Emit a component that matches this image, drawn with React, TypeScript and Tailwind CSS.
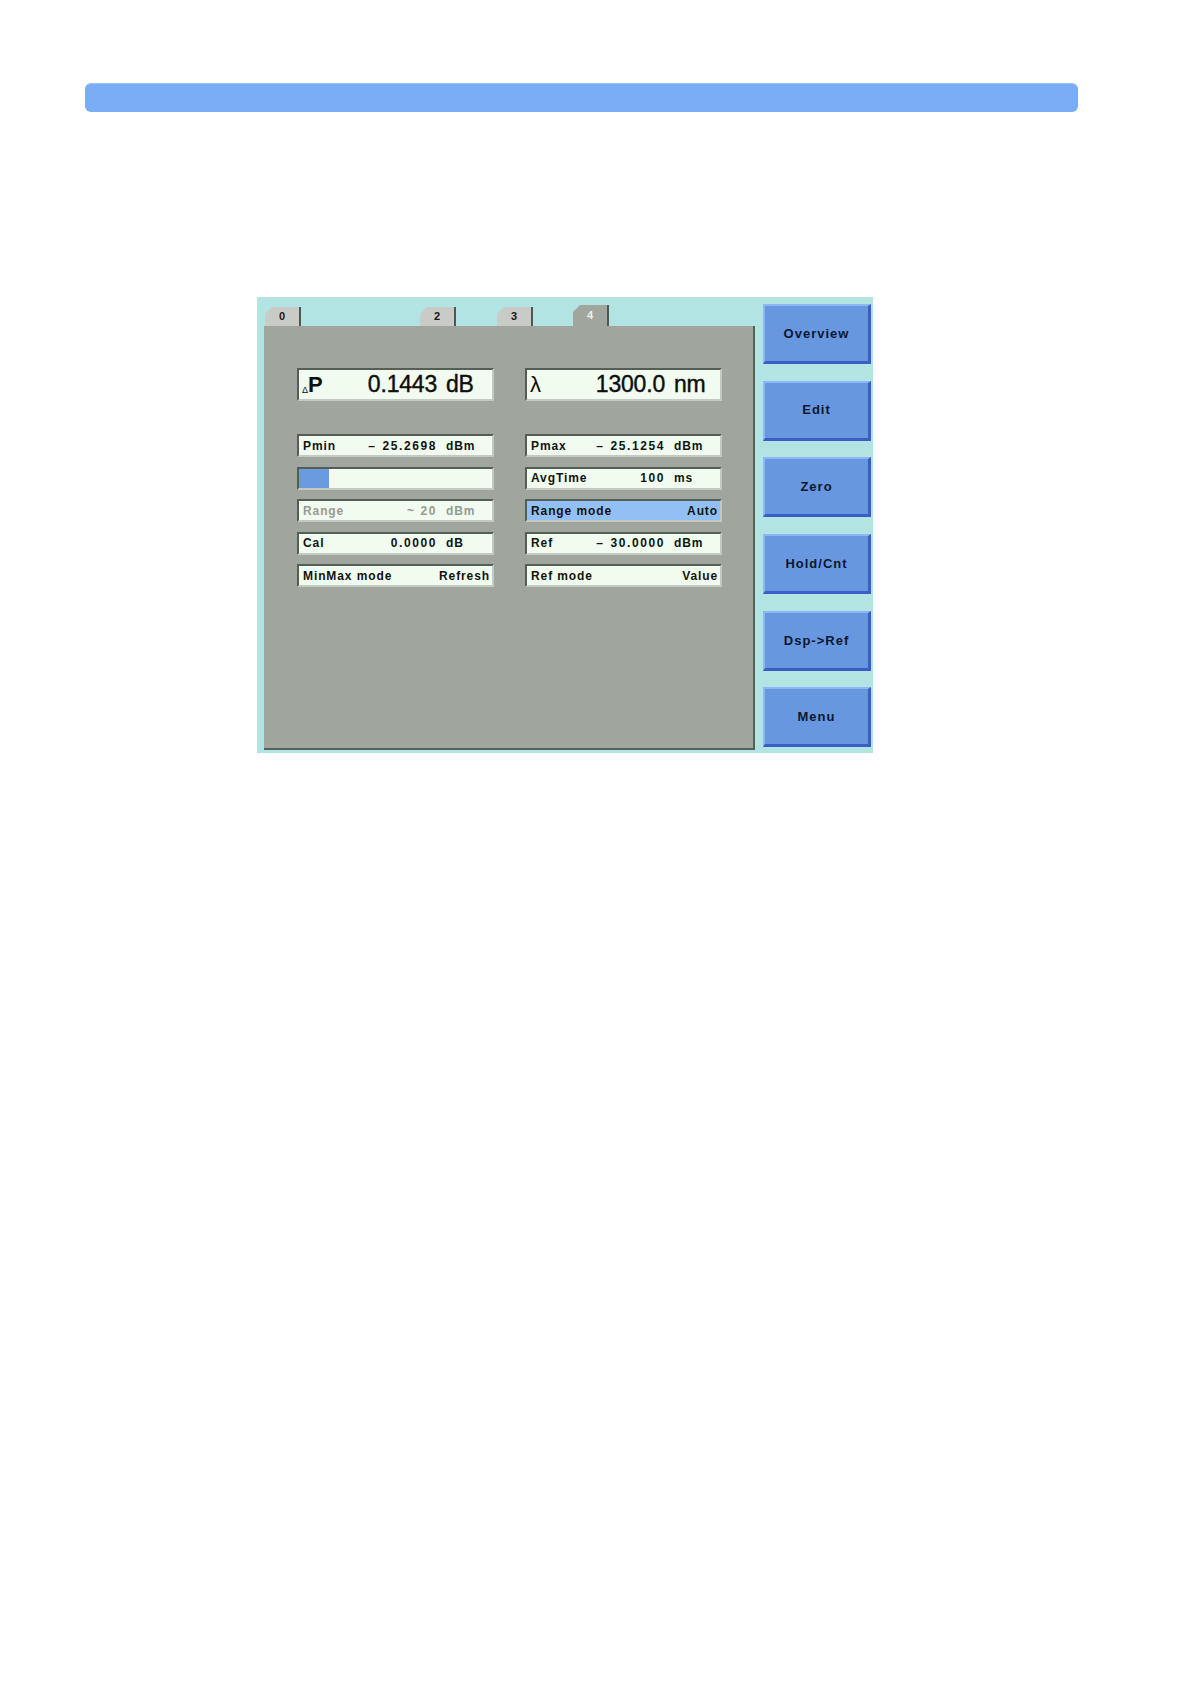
const font = { fontFamily: '"Liberation Sans", Arial, sans-serif' };

type Row = {
  label: string;
  value?: string;
  neg?: boolean;
  unit?: string;
  right?: string;
  variant?: "normal" | "disabled" | "selected" | "bar";
};

const leftRows: Row[] = [
  { label: "Pmin", neg: true, value: "25.2698", unit: "dBm" },
  { label: "", variant: "bar" },
  { label: "Range", value: "~ 20", unit: "dBm", variant: "disabled" },
  { label: "Cal", value: "0.0000", unit: "dB" },
  { label: "MinMax mode", right: "Refresh" },
];

const rightRows: Row[] = [
  { label: "Pmax", neg: true, value: "25.1254", unit: "dBm" },
  { label: "AvgTime", value: "100", unit: "ms" },
  { label: "Range mode", right: "Auto", variant: "selected" },
  { label: "Ref", neg: true, value: "30.0000", unit: "dBm" },
  { label: "Ref mode", right: "Value" },
];

const buttons = ["Overview", "Edit", "Zero", "Hold/Cnt", "Dsp->Ref", "Menu"];

function Field({ row }: { row: Row }) {
  const variant = row.variant ?? "normal";
  const bg = variant === "selected" ? "bg-[#92c0f4]" : "bg-[#f1fbef]";
  const color = variant === "disabled" ? "text-[#959b95]" : "text-[#101410]";

  return (
    <div
      className={`flex h-[23px] w-[197px] items-center border-t-2 border-l-2 border-t-[#555e55] border-l-[#555e55] border-b-2 border-r-2 border-b-[#c3cac2] border-r-[#c3cac2] text-[12px] font-bold tracking-[0.9px] ${bg} ${color}`}
    >
      {variant === "bar" ? (
        <div className="h-full w-[30px] bg-[#6a9ae0]" />
      ) : (
        <>
          <span className="flex-1 pl-[4px] whitespace-nowrap">{row.label}</span>
          {row.right ? (
            <span className="pr-[2px]">{row.right}</span>
          ) : (
            <>
              <span className="mr-[9px] whitespace-nowrap tracking-[1.6px]">
                {row.neg ? <span className="mr-[6px]">–</span> : null}
                {row.value}
              </span>
              <span className="w-[46px]">{row.unit}</span>
            </>
          )}
        </>
      )}
    </div>
  );
}

function BigField({ label, value, unit }: { label: React.ReactNode; value: string; unit: string }) {
  return (
    <div className="flex h-[33px] w-[197px] items-center border-t-2 border-l-2 border-t-[#555e55] border-l-[#555e55] border-b-2 border-r-2 border-b-[#c3cac2] border-r-[#c3cac2] bg-[#f1fbef] text-[#0c0f0c]">
      <span className="flex-1 pl-[3px] leading-none">{label}</span>
      <span className="mr-[9px] text-[23px] leading-none tracking-[-0.2px] [-webkit-text-stroke:0.4px_#0c0f0c]">{value}</span>
      <span className="w-[46px] text-[23px] leading-none tracking-[-0.2px] [-webkit-text-stroke:0.4px_#0c0f0c]">{unit}</span>
    </div>
  );
}

function Tab({ label, active, className }: { label: string; active?: boolean; className: string }) {
  return (
    <div
      className={`flex w-[36px] items-center justify-center border-r-2 border-r-[#4f574f] text-[11px] font-bold [clip-path:polygon(7px_0,100%_0,100%_100%,0_100%,0_7px)] ${
        active ? "h-[21px] bg-[#a0a59e] text-[#eef2ee]" : "h-[19px] bg-[#c9cbc7] text-[#151815]"
      } ${className}`}
    >
      {label}
    </div>
  );
}

export default function App() {
  return (
    <div className="min-h-[1682px] w-[1190px] bg-white" style={font}>
      <div className="pt-[83px] pl-[85px]">
        <div className="h-[29px] w-[993px] rounded-[6px] border-t border-t-[#9cc3f8] bg-[#79adf6]" />
      </div>

      <div className="mt-[185px] ml-[257px] flex h-[456px] w-[616px] bg-[#b2e4e3]">
        <div className="ml-[7px] flex w-[491px] flex-col pb-[3px]">
          <div className="flex h-[29px] items-end">
            <Tab label="0" className="ml-[1px]" />
            <Tab label="2" className="ml-[119px]" />
            <Tab label="3" className="ml-[41px]" />
            <Tab label="4" active className="ml-[40px]" />
          </div>

          <div className="flex-1 border-r-2 border-b-2 border-[#566156] bg-[#a0a59e] pt-[42px] pl-[33px]">
            <div className="flex gap-[31px]">
              <BigField
                label={
                  <span className="inline-flex items-end">
                    <span className="mb-[1px] text-[9px] leading-none">Δ</span>
                    <span className="text-[22px] font-bold leading-none">P</span>
                  </span>
                }
                value="0.1443"
                unit="dB"
              />
              <BigField label={<span className="text-[22px] leading-none">λ</span>} value="1300.0" unit="nm" />
            </div>

            <div className="mt-[33px] flex gap-[31px]">
              <div className="flex flex-col gap-[9.5px]">
                {leftRows.map((row, i) => (
                  <Field key={i} row={row} />
                ))}
              </div>
              <div className="flex flex-col gap-[9.5px]">
                {rightRows.map((row, i) => (
                  <Field key={i} row={row} />
                ))}
              </div>
            </div>
          </div>
        </div>

        <div className="ml-[8px] flex flex-col gap-[16.7px] pt-[7px]">
          {buttons.map((b) => (
            <div
              key={b}
              className="flex h-[60px] w-[108px] items-center justify-center border-t-2 border-l-2 border-t-[#8db6f4] border-l-[#8db6f4] border-b-[3px] border-r-[3px] border-b-[#3b5ec6] border-r-[#3b5ec6] bg-[#6797df] text-[13px] font-bold tracking-[1px] text-[#0d1630]"
            >
              {b}
            </div>
          ))}
        </div>
      </div>
    </div>
  );
}
